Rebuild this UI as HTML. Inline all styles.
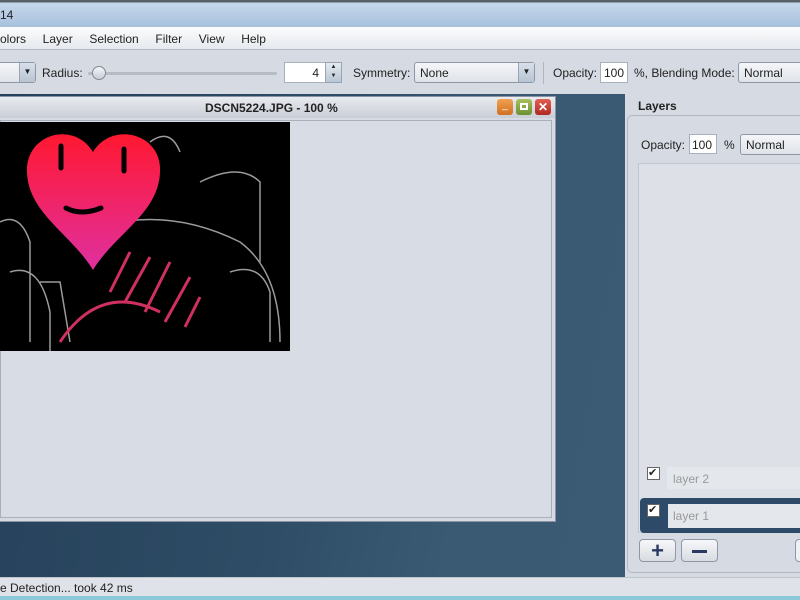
<!DOCTYPE html>
<html><head><style>
*{margin:0;padding:0;box-sizing:border-box}
body{width:800px;height:600px;overflow:hidden;position:relative;font-family:"Liberation Sans",sans-serif;font-size:12px;color:#222;background:#d6dae2}
.a{position:absolute}
.field{position:absolute;background:#fff;border:1px solid #a8b0bc}
.combo{position:absolute;background:linear-gradient(#f4f6f8,#dfe3e8);border:1px solid #8f98a6;border-radius:3px;padding:3px 5px}
.arr{position:absolute;right:0;top:0;bottom:0;width:16px;background:linear-gradient(#d8e0ea,#b8c4d2);border-left:1px solid #9aa4b2;font-size:8px;text-align:center;line-height:18px}
</style></head><body>
<div class="a" style="left:0;top:0;width:800px;height:27px;background:linear-gradient(#5a6068 0,#5a6068 2px,#c6d7ea 3px,#a8c2de 26px);"></div>
<div class="a" style="left:0;top:8px;font-size:12px">14</div>
<div class="a" style="left:0;top:27px;width:800px;height:23px;background:linear-gradient(#fbfcfd,#e6e9ee);border-bottom:1px solid #b4bcc6"></div>
<div class="a" style="left:0;top:32px;word-spacing:0">olors&nbsp;&nbsp;&nbsp;&nbsp;&nbsp;Layer&nbsp;&nbsp;&nbsp;&nbsp;&nbsp;Selection&nbsp;&nbsp;&nbsp;&nbsp;&nbsp;Filter&nbsp;&nbsp;&nbsp;&nbsp;&nbsp;View&nbsp;&nbsp;&nbsp;&nbsp;&nbsp;Help</div>
<div class="combo" style="left:-5px;top:62px;width:41px;height:21px"><div class="arr">▼</div></div>
<div class="a" style="left:42px;top:66px">Radius:</div>
<div class="a" style="left:88px;top:72px;width:189px;height:3px;background:#b6bcc4;border-radius:2px"></div>
<div class="a" style="left:92px;top:66px;width:14px;height:14px;border-radius:50%;background:linear-gradient(#f4f6f8,#c8ced6);border:1px solid #7f8894"></div>
<div class="field" style="left:284px;top:62px;width:42px;height:21px;text-align:right;padding:3px 6px">4</div>
<div class="a" style="left:325px;top:62px;width:17px;height:21px;background:linear-gradient(#e4eaf0,#b8c6d4);border:1px solid #9aa4b2;font-size:6px;text-align:center;line-height:9px">▲<br>▼</div>
<div class="a" style="left:353px;top:66px">Symmetry:</div>
<div class="combo" style="left:414px;top:62px;width:121px;height:21px">None<div class="arr">▼</div></div>
<div class="a" style="left:543px;top:62px;width:1px;height:22px;background:#b0b6c0"></div>
<div class="a" style="left:553px;top:66px">Opacity:</div>
<div class="field" style="left:600px;top:62px;width:28px;height:21px;padding:3px 3px">100</div>
<div class="a" style="left:634px;top:66px">%, Blending Mode:</div>
<div class="combo" style="left:738px;top:62px;width:70px;height:21px">Normal</div>
<div class="a" style="left:0;top:94px;width:800px;height:483px;background:linear-gradient(100deg,#25405a 0%,#2f4d66 40%,#3a5a74 60%,#3c5c76 100%)"></div>
<div class="a" style="left:-2px;top:96px;width:558px;height:426px;background:#d6dae2;border:1px solid #8a94a2"></div>
<div class="a" style="left:0;top:97px;width:555px;height:21px;background:linear-gradient(#e8ebef,#c9ced6)"></div>
<div class="a" style="left:205px;top:101px;font-weight:bold">DSCN5224.JPG - 100 %</div>
<div class="a" style="left:497px;top:99px;width:16px;height:16px;border-radius:3px;background:linear-gradient(#f0a050,#d07020);color:#fff;font-size:10px;text-align:center;line-height:14px">_</div>
<div class="a" style="left:516px;top:99px;width:16px;height:16px;border-radius:3px;background:linear-gradient(#a8c060,#6a9030)"><div class="a" style="left:4px;top:4px;width:8px;height:7px;border:2px solid #fff"></div></div>
<div class="a" style="left:535px;top:99px;width:16px;height:16px;border-radius:3px;background:linear-gradient(#e06050,#b02820);color:#fff;font-size:12px;font-weight:bold;text-align:center;line-height:16px">✕</div>
<div class="a" style="left:0;top:120px;width:552px;height:398px;border:1px solid #a8b0bc;background:#d8dce4"></div>
<div class="a" style="left:0;top:122px;width:290px;height:229px;background:#000;overflow:hidden">
<svg width="290" height="229">
<g stroke="#ddd" fill="none" stroke-width="1.5" opacity=".7">
<path d="M0 100 q20 -10 30 20 v100"/><path d="M10 150 q30 -10 40 40 v40"/><path d="M120 100 q60 -10 120 20 q40 30 40 100"/><path d="M200 60 q40 -20 60 0 v80"/><path d="M40 160 l20 0 l10 60"/><path d="M150 20 q20 -15 30 10"/><path d="M230 150 q30 -10 40 20 v50"/></g>
<g stroke="#d03060" stroke-width="3" fill="none"><path d="M110 170 l20 -40"/><path d="M125 180 l25 -45"/><path d="M145 190 l25 -50"/><path d="M165 200 l25 -45"/><path d="M185 205 l15 -30"/><path d="M60 220 q40 -60 100 -30"/></g>
<defs><linearGradient id="g" x1="0" y1="0" x2="0" y2="1"><stop offset="0" stop-color="#ff1830"/><stop offset="1" stop-color="#e030a0"/></linearGradient></defs>
<path d="M93 148 C70 110 25 90 27 45 C30 10 75 0 93 30 C111 0 158 10 160 45 C162 90 116 110 93 148Z" fill="url(#g)"/>
<g stroke="#000" stroke-width="5" stroke-linecap="round" fill="none"><path d="M61 24 v22"/><path d="M124 27 v22"/><path d="M66 86 q15 8 35 0"/></g>
</svg></div>
<div class="a" style="left:625px;top:94px;width:175px;height:483px;background:#d6dae2"></div>
<div class="a" style="left:638px;top:99px;font-weight:bold">Layers</div>
<div class="a" style="left:627px;top:115px;width:180px;height:458px;border:1px solid #b0b8c2;border-radius:5px"></div>
<div class="a" style="left:641px;top:138px">Opacity:</div>
<div class="field" style="left:689px;top:134px;width:28px;height:20px;padding:3px 2px">100</div>
<div class="a" style="left:724px;top:138px">%</div>
<div class="combo" style="left:740px;top:134px;width:70px;height:21px">Normal</div>
<div class="a" style="left:638px;top:163px;width:170px;height:370px;background:#dde0e6;border:1px solid #c0c6ce"></div>
<div class="a" style="left:647px;top:467px;width:13px;height:13px;background:#fff;border:1px solid #666;font-size:11px;line-height:11px">✔</div>
<div class="a" style="left:667px;top:467px;width:140px;height:22px;background:#e4e7ec;color:#999;padding:5px 6px">layer 2</div>
<div class="a" style="left:640px;top:498px;width:168px;height:35px;background:#2d4a68;border-radius:4px"></div>
<div class="a" style="left:647px;top:504px;width:13px;height:13px;background:#fff;border:1px solid #666;font-size:11px;line-height:11px">✔</div>
<div class="a" style="left:668px;top:504px;width:140px;height:24px;background:#e4e7ec;color:#999;padding:5px 5px">layer 1</div>
<div class="a" style="left:639px;top:539px;width:37px;height:23px;border:1px solid #8f98a6;border-radius:4px;background:linear-gradient(#f6f7f9,#d8dce2);color:#2a3a60;font-size:22px;font-weight:bold;text-align:center;line-height:21px">+</div>
<div class="a" style="left:681px;top:539px;width:37px;height:23px;border:1px solid #8f98a6;border-radius:4px;background:linear-gradient(#f6f7f9,#d8dce2)"><div class="a" style="left:10px;top:10px;width:15px;height:3px;background:#2a3a60"></div></div>
<div class="a" style="left:795px;top:539px;width:20px;height:23px;border:1px solid #8f98a6;border-radius:4px;background:#eef0f3"></div>
<div class="a" style="left:0;top:577px;width:800px;height:20px;background:#dfe2e8;border-top:1px solid #c0c6ce;padding:3px 0 0 0">e Detection... took 42 ms</div>
<div class="a" style="left:0;top:596px;width:800px;height:4px;background:#8cc8d8"></div>
</body></html>
